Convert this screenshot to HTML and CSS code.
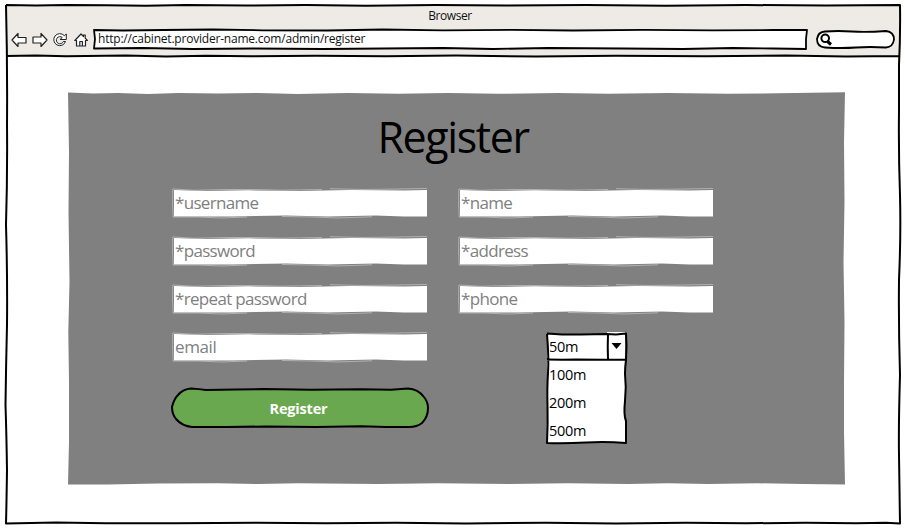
FILE: index.html
```html
<!DOCTYPE html>
<html lang="en">
<head>
<meta charset="utf-8">
<title>Register</title>
<link rel="stylesheet" href="styles.css">
</head>
<body>
<svg class="defs" width="0" height="0">
  <symbol id="field" viewBox="0 0 256 30" overflow="visible">
    <path class="paper" d="M2 2 L34 3 L76 2.300 L128 3 L178 2 L232 2.500 L255 2 V28.500 L232 28.500 L204 27.500 L156 28.500 L114 27.500 L60 28.500 L2 28.500 Z"/>
    <path class="edge" d="M1 1 L22 2.300 L55 1.500 L80 1.500 L110 2.200 L150 1.500 M158 .7 L190 1.500 L215 1.200 L255 .5 M1 29 L25 29 L50 30 L75 29 M110 28.500 L140 29 L165 30 L200 28.800 M.8 1 Q.2 15 1.200 29"/>
  </symbol>
</svg>
<div class="window">
  <header class="chrome">
    <svg class="sketch" viewBox="0 0 895 52"><path class="chrome-fill" d="M0 0 H894 V51 H0 Z"/></svg>
    <div class="title">Browser</div>
    <div class="toolbar">
      <nav class="nav">
        <svg class="icon" width="16" height="16" viewBox="0 0 16 16"><path d="M1 8 L7 1.500 V5.500 H15 V11 H7 V14.500 Z"/></svg>
        <svg class="icon" width="16" height="16" viewBox="0 0 16 16"><path d="M15 8 L9 1.500 V5 H1 V11 H9 V14.500 Z"/></svg>
        <svg class="icon thin" width="16" height="16" viewBox="0 0 16 16"><path d="M14.300 2 V7.500 H8 L10.300 5.500 A3.600 3.600 0 1 0 11.300 9.500 H13.500 A6 6 0 1 1 12.300 3.700 Z"/></svg>
        <svg class="icon" width="16" height="16" viewBox="0 0 16 16"><path d="M1.800 8.500 L8 2 L10.500 4.500 V3 H12.200 V6.200 L14.400 8.500 H12.500 V14 H3.500 V8.500 Z M6.800 14 V9.500 H9.400 V14"/></svg>
      </nav>
      <div class="address">
        <svg class="sketch" viewBox="0 0 715 21"><path class="box" d="M1 1 L30 1.500 L70 1 L120 .5 L170 1.300 L235 1.500 L290 .5 L350 1.300 L420 .8 L480 1.500 L550 .8 L620 1.300 L680 1 L714 1 L713 10 L713 20 L680 19.500 L640 19 L590 20 L530 19.500 L455 19 L400 20 L350 19 L290 19.500 L230 20 L160 19.500 L100 20 L50 19 L1 19.500 L2 10 Z"/></svg>
        <span>http://cabinet.provider-name.com/admin/register</span>
      </div>
      <div class="search">
        <svg class="sketch" viewBox="0 0 79 19"><path class="box" d="M9 1.500 Q22 .5 36 1.500 T70 1 Q78 2 78 9.500 Q77 17 70 17.500 Q54 16.500 40 17.500 T9 17.500 Q1 17 1 9 Q2 2 9 1.500 Z"/><circle class="lens" cx="9.200" cy="8.300" r="3.800"/><path class="handle" d="M11.500 11.500 L15 14.500"/></svg>
      </div>
    </div>
  </header>
  <main class="page">
    <form class="panel">
      <svg class="sketch" viewBox="0 0 777 393"><path class="panel-fill" d="M0 .5 L25 1.500 L50 1 L80 2 L110 1 L150 1.500 L190 1 L230 2 L280 1 L330 1.800 L380 1 L430 1.800 L490 1 L540 1.800 L600 1 L660 1.800 L710 1.300 L777 .3 L776 50 L776.500 110 L775.500 170 L776.500 230 L776 290 L776 340 L777 392.500 L735 392 L690 391.300 L640 392 L600 391.300 L560 392 L500 391.300 L440 392 L370 391.300 L310 392 L230 391.300 L190 392 L150 391.300 L90 391.500 L40 392.500 L0 392.500 L1 350 L1 290 L.3 240 L1.500 190 L.5 120 L1 60 Z"/></svg>
      <h1>Register</h1>
      <div class="columns">
        <div class="column">
          <div class="field"><svg class="sketch"><use href="#field"/></svg><span>*username</span></div>
          <div class="field"><svg class="sketch"><use href="#field"/></svg><span>*password</span></div>
          <div class="field"><svg class="sketch"><use href="#field"/></svg><span>*repeat password</span></div>
          <div class="field"><svg class="sketch"><use href="#field"/></svg><span class="email">email</span></div>
          <div class="button">
            <svg class="sketch" viewBox="0 0 258 42"><path class="button-fill" d="M20 1.500 Q28 2 35 3 L65 2.500 L92 2 L140 2.800 L190 2.300 L220 2.700 L237 1.500 Q247 2 253 10 Q257 15 257 21 Q257 30 251 36 Q246 40 238 40 L215 40 L190 39.300 L145 40 L95 39.500 L55 40 L21 40 Q11 39 5 32 Q1 27 1 20 Q3 12 7 8 Q12 2 20 1.500 Z"/></svg>
            <span>Register</span>
          </div>
        </div>
        <div class="column">
          <div class="field"><svg class="sketch"><use href="#field"/></svg><span>*name</span></div>
          <div class="field"><svg class="sketch"><use href="#field"/></svg><span>*address</span></div>
          <div class="field"><svg class="sketch"><use href="#field"/></svg><span>*phone</span></div>
          <div class="select">
            <svg class="sketch" viewBox="0 0 81 112"><path class="paper" d="M1 1 H61 V-1 H79 V110 H1 Z"/><path class="line" d="M1 .5 L16 1.500 L35 1.500 L61 1 L70 1.500 L80 .5 Q81 13 80 27 Q79 34 79 41 Q80.500 54 79 68 T80 88 L80 110 Q60 108.500 40 109.500 T1 110 Q2 91 1.500 73 T2 40 T1 1 M1 26.500 L16 26.800 L30 26.500 L58 26.800 L80 26.500 M62 1 Q61.500 14 62 26.500"/><path class="caret" d="M65.500 10 H75.500 L70.500 16 Z"/></svg>
            <div class="option">50m</div>
            <div class="option">100m</div>
            <div class="option">200m</div>
            <div class="option">500m</div>
          </div>
        </div>
      </div>
    </form>
  </main>
  <svg class="sketch" viewBox="0 0 895 519"><path class="line" d="M0 0 L30 .6 L60 0 L100 .2 L140 .8 L180 0 L240 .5 L300 0 L360 .8 L430 0 L500 .6 L580 0 L660 .8 L740 0 L820 .6 L894 0 Q894.500 30 893 60 L893 105 Q892.500 150 894 190 Q895 230 893 275 Q892.500 320 894 370 Q892.500 420 893 450 L894 518.500 L880 517.700 L850 518.300 L800 517.700 L740 518.300 L680 517.700 L610 518.500 L540 517.700 L460 518.500 L390 517.700 L320 518.300 L250 517.700 L170 518.300 L100 518.300 L50 517.500 L0 518.500 Q.5 500 1 465 Q.5 430 -.5 400 Q0 360 1 320 Q1.500 270 0 220 Q1.500 170 1 120 Q1.500 60 0 0 M0 51 L30 50.500 L60 51.200 L120 50.600 L160 51.500 L200 50.800 L245 51.300 L310 50.800 L380 51.300 L450 50.600 L530 51.500 L610 50.700 L700 51.300 L780 50.600 L840 51.500 L894 51"/></svg>
</div>
</body>
</html>
```

FILE: styles.css
```css
* { box-sizing: border-box; }
body { margin: 0; width: 905px; height: 529px; overflow: hidden; background: #fff; color: #000; font-family: "Open Sans", "Noto Sans", sans-serif; }
.defs { position: absolute; }
.window { position: relative; width: 895px; height: 519px; margin: 5px 0 0 6px; }
.sketch { position: absolute; top: 0; left: 0; width: 100%; height: 100%; overflow: visible; pointer-events: none; }
path, circle { stroke-linejoin: round; }
.line { fill: none; stroke: #000; stroke-width: 2; }
.box { fill: #fff; stroke: #000; stroke-width: 1.8; }
.chrome { position: relative; height: 52px; }
.chrome-fill { fill: #eeebe7; }
.title { position: relative; height: 24px; padding-right: 7px; line-height: 22px; font-size: 12px; letter-spacing: -0.4px; text-align: center; color: #111; }
.toolbar { position: relative; display: flex; align-items: center; height: 21px; padding-left: 5px; }
.nav { display: flex; gap: 4.500px; width: 82px; }
.icon { fill: #fff; stroke: #222; stroke-width: 1.2; flex: none; }
.thin { stroke-width: 1; }
.address { position: relative; width: 715px; height: 21px; padding-left: 5px; line-height: 20px; font-size: 12px; letter-spacing: -0.21px; color: #111; }
.address span { position: relative; }
.search { position: relative; width: 79px; height: 19px; margin-left: 8px; }
.lens { fill: none; stroke: #000; stroke-width: 2; }
.handle { fill: none; stroke: #000; stroke-width: 3; }
.page { padding: 35px 0 0 62px; }
.panel { position: relative; width: 777px; height: 393px; padding: 15px 0 0 104px; }
.panel-fill { fill: #808080; }
h1 { position: relative; margin: 0 111px 21px 0; height: 60px; line-height: 60px; font-size: 43px; font-weight: 400; letter-spacing: -1.4px; text-align: center; }
.columns { position: relative; display: flex; gap: 30px; }
.column { width: 256px; }
.field { position: relative; height: 30px; margin-bottom: 18px; padding-left: 3px; line-height: 30px; font-size: 17px; letter-spacing: -0.68px; color: #808080; white-space: nowrap; }
.field span { position: relative; }
.field .email { letter-spacing: -0.4px; }
.paper { fill: #fff; }
.edge { fill: none; stroke: #c4c4c4; stroke-width: .7; }
.button { position: relative; width: 258px; height: 42px; margin: 25px 0 0 -1px; padding-right: 3px; line-height: 43px; font-size: 14.500px; font-weight: 700; letter-spacing: -0.2px; text-align: center; color: #fff; }
.button span { position: relative; }
.button-fill { fill: #6aa84f; stroke: #000; stroke-width: 2; }
.select { position: relative; width: 81px; height: 112px; margin: 19px 0 0 88px; }
.option { position: relative; height: 28px; padding-left: 3px; line-height: 28px; font-size: 14.500px; letter-spacing: -0.3px; }
.caret { fill: #000; }
```
